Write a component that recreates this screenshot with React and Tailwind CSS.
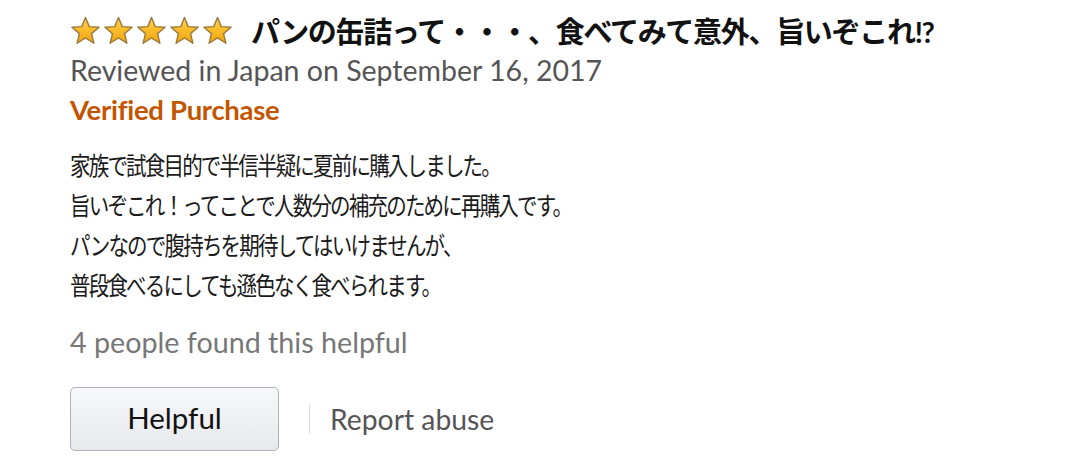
import React from "react";

function Star() {
  return (
    <svg width="31" height="30" viewBox="0 0 24 23">
      <defs>
        <linearGradient id="sg" x1="0" y1="0" x2="0" y2="1">
          <stop offset="0" stopColor="#ffd54a" />
          <stop offset="1" stopColor="#f4a20c" />
        </linearGradient>
      </defs>
      <polygon
        points="12,1 14.9,8.1 22.5,8.6 16.7,13.5 18.5,21 12,16.9 5.5,21 7.3,13.5 1.5,8.6 9.1,8.1"
        fill="url(#sg)"
        stroke="#9c7a3c"
        strokeWidth="1.1"
        strokeLinejoin="round"
      />
    </svg>
  );
}

export default function App() {
  const f = { fontFamily: 'Lato, "Noto Sans CJK JP", sans-serif' };
  return (
    <div className="w-[1080px] h-[465px] bg-white overflow-hidden pl-[70px] pt-[12px]" style={f}>
      <div className="flex items-center h-[38px]">
        <div className="flex gap-[2px]">
          <Star /><Star /><Star /><Star /><Star />
        </div>
        <div className="ml-[18px] text-[29px] font-bold text-[#111] tracking-[-1.3px] leading-none">
          パンの缶詰って・・・、食べてみて意外、旨いぞこれ!?
        </div>
      </div>
      <div className="mt-[2px] text-[28.5px] text-[#555] leading-[36px]">
        Reviewed in Japan on September 16, 2017
      </div>
      <div className="mt-[5px] text-[27.5px] font-bold text-[#c45500] leading-[34px] tracking-[-0.3px]">
        Verified Purchase
      </div>
      <div className="mt-[18px] text-[25px] text-[#1a1a1a] leading-[40px] tracking-[-2.2px] origin-left scale-x-[0.82] whitespace-nowrap">
        <div>家族で試食目的で半信半疑に夏前に購入しました。</div>
        <div>旨いぞこれ！ってことで人数分の補充のために再購入です。</div>
        <div>パンなので腹持ちを期待してはいけませんが、</div>
        <div>普段食べるにしても遜色なく食べられます。</div>
      </div>
      <div className="mt-[20px] text-[28.7px] text-[#777] leading-[34px]">
        4 people found this helpful
      </div>
      <div className="mt-[28px] flex items-center">
        <button className="w-[209px] h-[64px] rounded-[5px] border border-[#adb1b8] bg-gradient-to-b from-[#f7f8fa] to-[#e7e9ec] text-[29.5px] text-[#111] pb-[2px]">
          Helpful
        </button>
        <div className="ml-[30px] w-px h-[30px] bg-[#ddd]" />
        <div className="ml-[20px] text-[28.3px] text-[#555]">Report abuse</div>
      </div>
    </div>
  );
}
